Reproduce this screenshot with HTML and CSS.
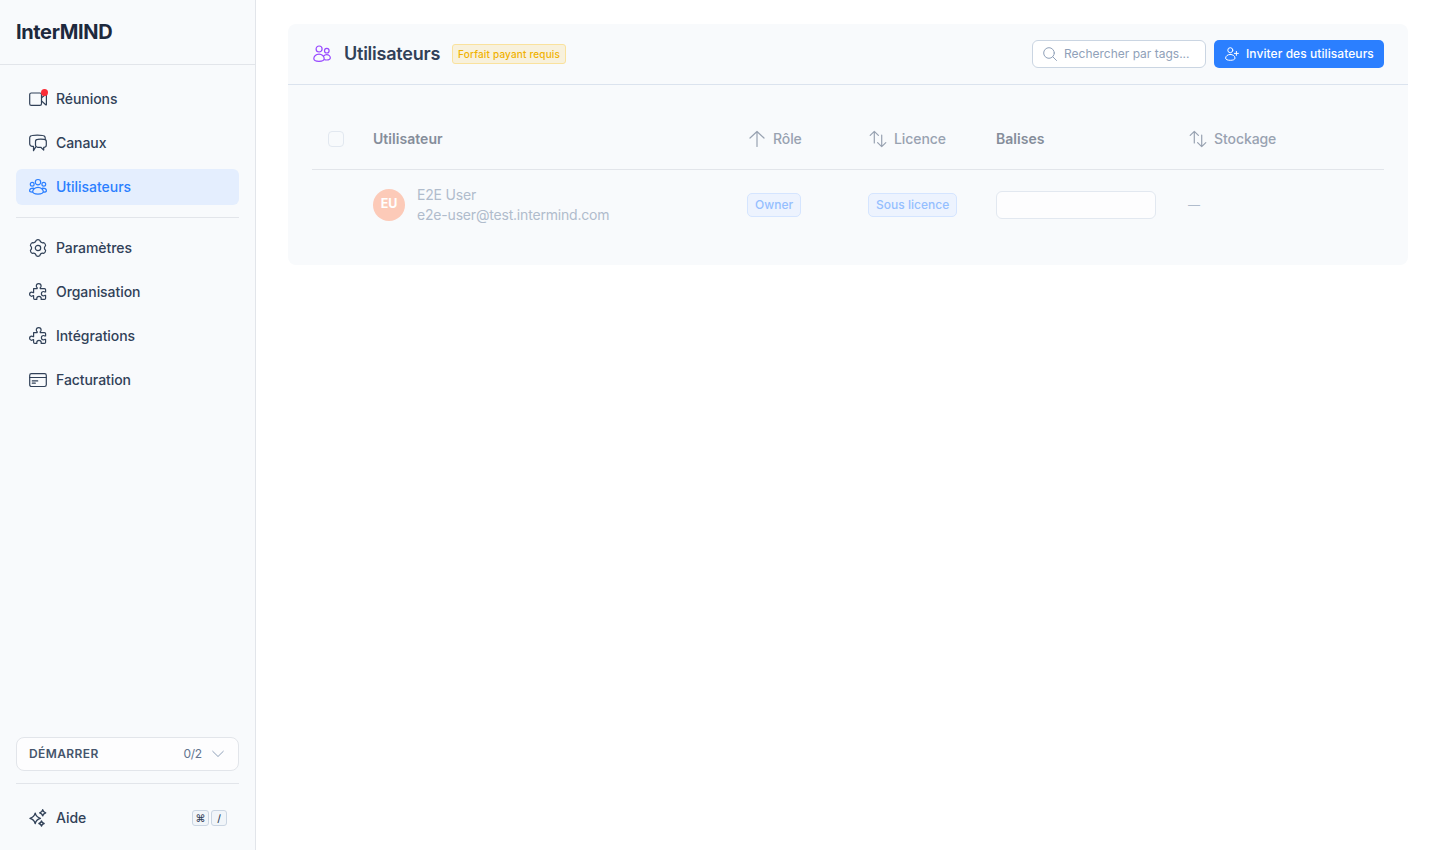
FILE: index.html
```html
<!DOCTYPE html>
<html lang="fr">
<head>
<meta charset="utf-8">
<title>InterMIND – Utilisateurs</title>
<link rel="stylesheet" href="styles.css">
</head>
<body>
<svg class="defs" width="0" height="0">
  <symbol id="puzzle" viewBox="0 0 18 18">
    <path d="M4.600 5.600h3.600v-.8q-.9-.6-.9-1.800a2.400 2.400 0 0 1 4.800 0q0 1.200-.9 1.800v.8h4.200q1.200 0 1.200 1.200V9h-.8q-.5-.5-1.200-.5a2.200 2.200 0 0 0 0 4.400q.7 0 1.200-.5h.8v2.800q0 1.200-1.200 1.200h-3.200v-.8a2.200 2.200 0 0 0-4.400 0v.8h-2q-1.200 0-1.200-1.200v-2.500H4q-.6.600-1.300.6a2.100 2.100 0 0 1 0-4.200q.7 0 1.300.6h.6z"/>
  </symbol>
  <symbol id="sort" viewBox="0 0 18 18">
    <path d="M5.300 13V1.400M1.200 5.400l4.100-4.100 4.100 4.100M12.700 5v11.600M8.600 12.600l4.100 4.100 4.100-4.100"/>
  </symbol>
</svg>
<div class="app">
  <aside class="sidebar">
    <div class="brand">InterMIND</div>
    <nav class="nav">
      <a class="item"><span class="icon-wrap"><svg class="icon" viewBox="0 0 18 18"><rect x=".7" y="3" width="11.800" height="12.300" rx="1.600"/><path d="M12.500 7.800l4.200-3.200q.7-.4.7.4v9.400q0 .8-.7.4l-4.200-3.900"/></svg><span class="dot"></span></span>Réunions</a>
      <a class="item"><svg class="icon" viewBox="0 0 18 18"><path d="M6.600 13.100l-2.100 3.600v-4.400H3.200A2.500 2.500 0 0 1 .7 9.800V4A2.500 2.500 0 0 1 3.200 1.500q5-.7 10.500 0A2.500 2.500 0 0 1 16.200 4v1.100"/><path d="M8.600 5.300q3-.4 6.600 0a2.200 2.200 0 0 1 2.100 2.200v3.600a2.200 2.200 0 0 1-2.100 2.200h-.5v2.800l-2.900-2.800H8.700a2.200 2.200 0 0 1-2.200-2.200V7.500a2.200 2.200 0 0 1 2.100-2.200z"/></svg>Canaux</a>
      <a class="item active"><svg class="icon" viewBox="0 0 18 18"><circle cx="9" cy="4.200" r="2.700"/><circle cx="3.200" cy="6.200" r="1.900"/><circle cx="14.800" cy="6.200" r="1.900"/><path d="M9 9.300c-3.200 0-5.300 2.300-5.300 4.300 0 1.600 2.300 2.500 5.300 2.500s5.300-.9 5.300-2.500c0-2-2.100-4.300-5.300-4.300zM3.200 14.200c-1.700 0-2.600-.5-2.600-1.400 0-1.600 1.500-2.700 3.900-2.700M14.800 14.200c1.700 0 2.600-.5 2.600-1.400 0-1.600-1.500-2.700-3.900-2.700"/></svg>Utilisateurs</a>
      <div class="rule"></div>
      <a class="item"><svg class="icon" viewBox="0 0 18 18"><circle cx="9" cy="9" r="2.700"/><path d="M7.300 1.200Q9 .2 10.700 1.200Q11.600 4.500 14.900 3.630Q16.450 4.700 16.600 6.570Q14.200 9 16.600 11.430Q16.450 13.300 14.900 14.370Q11.600 13.500 10.700 16.800Q9 17.800 7.300 16.800Q6.400 13.500 3.100 14.370Q1.550 13.300 1.400 11.430Q3.800 9 1.400 6.570Q1.550 4.700 3.100 3.630Q6.400 4.500 7.300 1.200z"/></svg>Paramètres</a>
      <a class="item"><svg class="icon"><use href="#puzzle"/></svg>Organisation</a>
      <a class="item"><svg class="icon"><use href="#puzzle"/></svg>Intégrations</a>
      <a class="item"><svg class="icon" viewBox="0 0 18 18"><rect x=".7" y="2.700" width="16.600" height="12.800" rx="1.700"/><path d="M.7 6.500h16.600M3.300 9.900h5.400M3.300 12.200h3"/></svg>Facturation</a>
    </nav>
    <div class="foot">
      <div class="start"><span class="start-title">DÉMARRER</span><span class="count">0/2</span><svg class="chev" viewBox="0 0 14 14"><path d="M1.700 4.300L7 9.500l5.300-5.200"/></svg></div>
      <div class="rule"></div>
      <a class="item help"><svg class="icon spark" viewBox="0 0 18 18"><path d="M6.200 4.100q1 4 5.200 5.200-4.200 1.200-5.200 5.200-1-4-5.200-5.200 4.200-1.200 5.200-5.200zM13.700.8q.5 2.300 3 3-2.500.7-3 3-.5-2.300-3-3 2.500-.7 3-3zM12.500 11.900q.4 2 2.600 2.600-2.200.6-2.600 2.600-.4-2-2.600-2.600 2.200-.6 2.600-2.600z"/></svg>Aide<span class="keys"><kbd>⌘</kbd><kbd>/</kbd></span></a>
    </div>
  </aside>
  <main class="main">
    <section class="card">
      <header class="card-head">
        <svg class="title-icon" viewBox="0 0 18 18"><circle cx="6.100" cy="4" r="3"/><circle cx="13.800" cy="5.700" r="2.300"/><path d="M6 9.100c-3 0-5.200 2.200-5.200 4.500 0 1.900 2.200 2.800 5.200 2.800s5.200-.9 5.200-2.800c0-2.300-2.200-4.500-5.200-4.500zM10.500 11.200c.8-.9 1.900-1.500 3.200-1.500 2.100 0 3.600 1.600 3.600 3.100 0 1.500-1.500 2.200-3.600 2.200-1.100 0-2-.2-2.700-.5"/></svg>
        <h1>Utilisateurs</h1>
        <span class="plan">Forfait payant requis</span>
        <div class="tools">
          <div class="search"><svg viewBox="0 0 14 14"><circle cx="6" cy="6" r="5.300"/><path d="M9.800 9.800l3.700 3.700"/></svg>Rechercher par tags...</div>
          <button class="invite"><svg viewBox="0 0 14 14"><circle cx="5.300" cy="3.200" r="2.500"/><path d="M5.300 7.400c-2.700 0-4.700 1.800-4.700 3.700 0 1.500 2 2.200 4.700 2.200s4.700-.7 4.700-2.200c0-1.900-2-3.700-4.700-3.700zM11.400 4.400v4M9.400 6.400h4"/></svg>Inviter des utilisateurs</button>
        </div>
      </header>
      <div class="card-body">
        <table>
          <colgroup><col class="c-check"><col class="c-user"><col class="c-role"><col class="c-lic"><col class="c-tags"><col class="c-store"></colgroup>
          <thead>
            <tr>
              <th><span class="check"></span></th>
              <th>Utilisateur</th>
              <th><span class="sort"><svg viewBox="0 0 18 18"><path d="M9 16.500V1.600M2 8l7-6.500L16 8"/></svg>Rôle</span></th>
              <th><span class="sort"><svg><use href="#sort"/></svg>Licence</span></th>
              <th>Balises</th>
              <th><span class="sort"><svg><use href="#sort"/></svg>Stockage</span></th>
            </tr>
          </thead>
          <tbody>
            <tr>
              <td></td>
              <td><div class="user"><span class="avatar">EU</span><div><div>E2E User</div><div>e2e-user@test.intermind.com</div></div></div></td>
              <td><span class="badge">Owner</span></td>
              <td><span class="badge">Sous licence</span></td>
              <td><div class="tags"></div></td>
              <td><span class="none">—</span></td>
            </tr>
          </tbody>
        </table>
      </div>
    </section>
  </main>
</div>
</body>
</html>
```

FILE: styles.css
```css
* { box-sizing: border-box; }
body { margin: 0; background: #fff; color: #314158; font: 500 14px/20px Inter, sans-serif; }
svg { fill: none; stroke: currentColor; stroke-width: 1.2; stroke-linecap: round; stroke-linejoin: round; flex: none; }
.defs { position: absolute; }
.app { display: flex; height: 850px; }

.sidebar { width: 256px; display: flex; flex-direction: column; background: #f8fafc; border-right: 1px solid #e2e5ea; }
.brand { height: 65px; padding: 0 16px; border-bottom: 1px solid #e2e5ea; color: #1d293d; font-size: 20px; font-weight: 700; line-height: 64px; letter-spacing: -.36px; }
.nav { flex: 1; padding: 16px 16px 0; }
.item { display: flex; align-items: center; height: 36px; padding: 0 12px 0 13px; gap: 9px; border-radius: 6px; letter-spacing: -.06px; }
.item + .item { margin-top: 8px; }
.item.active { background: #e4eefe; color: #2b7fff; letter-spacing: -.03px; }
.icon { width: 18px; height: 18px; }
.icon-wrap { position: relative; display: flex; }
.dot { position: absolute; top: -1px; right: -1px; width: 7px; height: 7px; border-radius: 50%; background: #fb2c36; }
.rule { height: 1px; margin: 12px 0; background: #e2e5ea; }
.foot { padding: 0 16px 14px; }
.start { display: flex; align-items: center; height: 34px; padding: 0 13px 0 12px; border: 1px solid #e2e5ea; border-radius: 8px; background: #fdfdfe; font-size: 12px; }
.start-title { font-weight: 600; letter-spacing: .4px; color: #45556c; }
.count { margin-left: auto; margin-right: 9px; color: #62748e; font-weight: 400; letter-spacing: -.2px; }
.chev { width: 14px; height: 14px; color: #90a1b9; stroke-width: 1; }
.help { margin-top: 16px; }
.spark { stroke-width: 1.4; }
.keys { display: flex; gap: 2px; margin-left: auto; }
kbd { display: flex; align-items: center; justify-content: center; width: 17px; height: 16px; border: 1px solid #cad5e2; border-radius: 3px; background: #f1f5f9; font: 500 10px/14px Inter, "DejaVu Sans", sans-serif; }
kbd + kbd { width: 16px; }

.main { flex: 1; padding: 24px 32px; }
.card { background: #f8fafc; border-radius: 8px; }
.card-head { display: flex; align-items: center; height: 61px; padding: 0 24px; border-bottom: 1px solid #dbe3ee; }
.title-icon { width: 20px; height: 18px; color: #9747ff; }
h1 { margin: 0 12px; font-size: 18px; line-height: 28px; font-weight: 600; letter-spacing: -.23px; }
.plan { height: 20px; padding: 0 5px; border: 1px solid #fae29d; border-radius: 3px; background: #f8f1dc; color: #f0b100; font-size: 10px; line-height: 19px; letter-spacing: .17px; }
.tools { display: flex; gap: 8px; margin-left: auto; font-size: 12px; letter-spacing: .07px; }
.tools svg { width: 14px; height: 14px; stroke-width: 1; }
.search { display: flex; align-items: center; gap: 7px; width: 174px; height: 28px; padding: 0 10px; border: 1px solid #cad5e2; border-radius: 6px; background: #fff; color: #90a1b9; font-weight: 400; letter-spacing: 0; }
.invite { display: flex; align-items: center; gap: 7px; width: 170px; height: 28px; padding: 0 0 0 11px; border: 0; border-radius: 5px; background: #2b7fff; color: #fff; font: inherit; letter-spacing: inherit; white-space: nowrap; }

.card-body { padding: 24px; }
table { width: 1072px; table-layout: fixed; border-collapse: separate; border-spacing: 0; }
.c-check { width: 45px; }
.c-user { width: 374px; }
.c-role { width: 121px; }
.c-lic { width: 128px; }
.c-tags { width: 192px; }
.c-store { width: 212px; }
th { height: 61px; padding: 0 16px; border-bottom: 1px solid #e2e5ea; text-align: left; font-weight: 600; color: #858d9a; letter-spacing: .04px; }
td { height: 71px; padding: 0 16px 2px; color: #b0bccc; font-weight: 400; letter-spacing: -.19px; }
.check { display: block; width: 16px; height: 16px; border: 1px solid #e2e8f0; border-radius: 4px; }
.sort { display: flex; align-items: center; gap: 7px; padding-left: 1px; color: #98a2b1; font-weight: 500; letter-spacing: -.08px; }
.sort svg { width: 18px; height: 18px; }
.user { display: flex; align-items: center; gap: 12px; }
.avatar { width: 32px; height: 32px; border-radius: 50%; background: #fccab8; color: #fff; font-size: 12.5px; font-weight: 700; line-height: 30px; text-align: center; }
.badge { display: inline-block; height: 24px; padding: 0 7px; border: 1px solid #d5e5ff; border-radius: 5px; background: #edf3fe; color: #95bfff; font-size: 12px; font-weight: 500; line-height: 22px; letter-spacing: .02px; vertical-align: middle; white-space: nowrap; }
.tags { height: 28px; border: 1px solid #e2e8f0; border-radius: 6px; background: #fdfdfe; }
.none { font-size: 12px; }
```
